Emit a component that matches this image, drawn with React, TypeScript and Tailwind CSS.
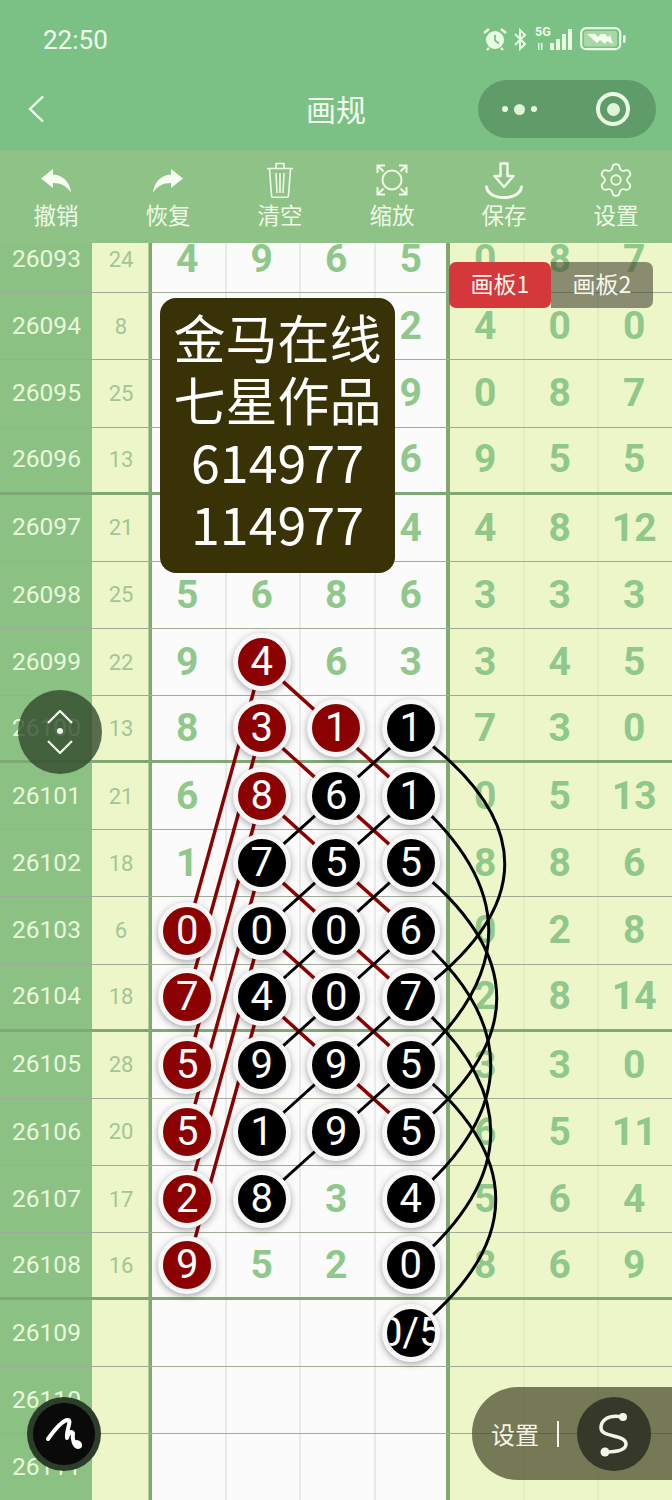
import { Settings } from "lucide-react";

const ROW_H = 67.13;
const COL_W = 74.5;
const cx = (col: number) => 150 + COL_W * col + COL_W / 2;
const cy = (row: number) => ROW_H / 2 + ROW_H * row;

// r = red ball, k = black ball, - = empty
const rows: [string, string, string][] = [
    ["26093", "24", "4 9 6 5 0 8 7"],
    ["26094", "8", "- - - 2 4 0 0"],
    ["26095", "25", "- - - 9 0 8 7"],
    ["26096", "13", "- - - 6 9 5 5"],
    ["26097", "21", "- - - 4 4 8 12"],
    ["26098", "25", "5 6 8 6 3 3 3"],
    ["26099", "22", "9 r4 6 3 3 4 5"],
    ["26100", "13", "8 r3 r1 k1 7 3 0"],
    ["26101", "21", "6 r8 k6 k1 0 5 13"],
    ["26102", "18", "1 k7 k5 k5 8 8 6"],
    ["26103", "6", "r0 k0 k0 k6 0 2 8"],
    ["26104", "18", "r7 k4 k0 k7 2 8 14"],
    ["26105", "28", "r5 k9 k9 k5 3 3 0"],
    ["26106", "20", "r5 k1 k9 k5 6 5 11"],
    ["26107", "17", "r2 k8 3 k4 5 6 4"],
    ["26108", "16", "r9 5 2 k0 8 6 9"],
    ["26109", "", "- - - k0/5 - - -"],
    ["26110", "", "- - - - - - -"],
    ["26111", "", "- - - - - - -"],
];

const redLinks = [
    [1, 6], [1, 7], [2, 7], [1, 8], [2, 8], [1, 9], [2, 9], [1, 10], [2, 10], [1, 11], [2, 11], [2, 12],
];
const blackLinks = [
    [3, 7], [2, 8], [3, 8], [2, 9], [3, 9], [2, 10], [3, 10], [2, 11], [3, 11], [2, 12], [3, 12], [2, 13],
];
const arcs = [
    [7, 94], [8, 78], [9, 86], [10, 80], [11, 80], [12, 85],
];

function Ball(props: { kind: string; value: string }) {
    return (
        <div
            className={`relative z-20 flex h-[58px] w-[58px] items-center justify-center overflow-hidden rounded-full border-[5px] border-[#f7f7f7] font-['Roboto',sans-serif] text-[40px] font-normal whitespace-nowrap text-white shadow-[0_2px_7px_rgba(0,0,0,0.35)] ${props.kind === "r" ? "bg-[#8b0000]" : "bg-black"}`}
        >
            {props.value}
        </div>
    );
}

function cellEdge(i: number) {
    if (i === 0 || i === 4) return "shadow-[inset_2px_0_0_#7fa874]";
    if (i === 3) return "shadow-[inset_2px_0_0_#e9e9e9,inset_-2px_0_0_#7fa874]";
    return i < 4 ? "shadow-[inset_2px_0_0_#e9e9e9]" : "shadow-[inset_2px_0_0_#e2eec0]";
}

function Row(props: { id: string; sum: string; cells: string; idx: number }) {
    const thick = (props.idx + 1) % 4 === 0;
    return (
        <div
            className={`grid h-[67.13px] grid-cols-[92px_58px_repeat(7,74.5px)] font-['Roboto',sans-serif] shadow-[0_1px_0_0_#8fa588] ${thick ? "border-b-[3px] border-[#7fa874]" : "border-b border-[#9dab97]"}`}
        >
            <div className="flex items-center justify-center bg-[#8cc184] pl-[1px] text-[24.500px] text-[#e9f9dc]">{props.id}</div>
            <div className="flex items-center justify-center bg-[#edf6c8] text-[22px] text-[#a4c596] shadow-[inset_-1.500px_0_0_#7fa874]">{props.sum}</div>
            {props.cells.split(" ").map((cell, i) => {
                const ball = cell[0] === "r" || cell[0] === "k";
                const bg = i < 4 ? "bg-[#fbfbfb]" : "bg-[#edf6c8]";
                return (
                    <div
                        key={`cell-${props.id}-${i}`}
                        className={`flex items-center justify-center text-[39px] font-bold text-[#8fc88a] ${bg} ${cellEdge(i)}`}
                    >
                        {ball ? <Ball kind={cell[0]} value={cell.slice(1)} /> : cell === "-" ? "" : cell}
                    </div>
                );
            })}
        </div>
    );
}

function Lines() {
    return (
        <svg className="absolute top-0 left-0 z-10" width={672} height={1276} fill="none">
            {[6, 7, 8, 9, 10, 11].map((r) => (
                <line key={`long-${r}`} x1={cx(1)} y1={cy(r)} x2={cx(0)} y2={cy(r + 4)} stroke="#8b0000" strokeWidth={3.5} />
            ))}
            {redLinks.map(([c, r]) => (
                <line key={`red-${c}-${r}`} x1={cx(c)} y1={cy(r)} x2={cx(c + 1)} y2={cy(r + 1)} stroke="#8b0000" strokeWidth={3.5} />
            ))}
            {blackLinks.map(([c, r]) => (
                <line key={`black-${c}-${r}`} x1={cx(c)} y1={cy(r)} x2={cx(c - 1)} y2={cy(r + 1)} stroke="#000" strokeWidth={3} />
            ))}
            {arcs.map(([r, b]) => (
                <path
                    key={`arc-${r}`}
                    d={`M${cx(3)} ${cy(r)} Q${cx(3) + b * 2} ${cy(r + 2)} ${cx(3)} ${cy(r + 4)}`}
                    stroke="#000"
                    strokeWidth={3}
                />
            ))}
        </svg>
    );
}

function StatusIcons() {
    return (
        <div className="flex items-center text-[#eafbe4]">
            <svg width="24" height="24" viewBox="0 0 24 24" fill="none">
                <circle cx="12" cy="13" r="9" fill="#eafbe4" />
                <path d="M12 8v5.500l4 3" stroke="#7bc185" strokeWidth="1.800" />
                <path d="M1 6l5-4M23 6l-5-4M6 21l-2 2M18 21l2 2" stroke="#eafbe4" strokeWidth="2.400" />
            </svg>
            <svg className="ml-[6px]" width="14" height="23" viewBox="0 0 14 23" fill="none">
                <path d="M2 6l10 10-5 5V2l5 5L2 17" stroke="#eafbe4" strokeWidth="2" />
            </svg>
            <div className="relative ml-[8px] h-[23px] w-[40px]">
                <span className="absolute top-[-3px] left-0 font-['Roboto',sans-serif] text-[12.500px] leading-[14px] font-bold">5G</span>
                <svg className="absolute top-0 left-0" width="40" height="23" viewBox="0 0 40 23" fill="#eafbe4">
                    <rect x="3" y="15" width="1.500" height="7" />
                    <rect x="6" y="15" width="1.500" height="7" />
                    <rect x="15" y="15" width="4" height="7" />
                    <rect x="21" y="11" width="4" height="11" />
                    <rect x="27" y="6" width="4" height="16" />
                    <rect x="33" y="1" width="4" height="21" />
                </svg>
            </div>
            <svg className="ml-[5px]" width="47" height="24" viewBox="0 0 47 24" fill="none">
                <rect x="1.200" y="1.200" width="39" height="21" rx="5" stroke="#eafbe4" strokeWidth="2.200" />
                <rect x="4" y="4" width="33" height="15.500" rx="2.500" fill="#a9d8a6" />
                <path d="M7 7h8l3 3 3-3h4l3 3 2-2 3 9-6-3-2 3-5-4-3 3z" fill="#f3fff0" />
                <rect x="43" y="8" width="2.600" height="8" rx="1.300" fill="#eafbe4" />
            </svg>
        </div>
    );
}

function Tool(props: { label: string; children: React.ReactNode }) {
    return (
        <div className="flex w-[112px] flex-col items-center">
            <div className="flex h-[40px] items-center justify-center">{props.children}</div>
            <div className="mt-[-1px] text-[22.500px] leading-[30px] text-[#eefbe6]">{props.label}</div>
        </div>
    );
}

const ArrowPath = "M0 10.500L12 1v5.500C22 7 29 14 30 25 26 18 20 15 12 15v5z";

function Toolbar() {
    return (
        <div className="flex h-[93px] bg-[#8ec286] pt-[10px] text-[#f3fdee]">
            <Tool label="撤销">
                <svg width="30" height="25" viewBox="0 0 30 25" fill="#f6fef2">
                    <path d={ArrowPath} />
                </svg>
            </Tool>
            <Tool label="恢复">
                <svg width="30" height="25" viewBox="0 0 30 25" fill="#f6fef2" className="-scale-x-100">
                    <path d={ArrowPath} />
                </svg>
            </Tool>
            <Tool label="清空">
                <svg width="26" height="36" viewBox="0 0 26 36" fill="none" stroke="#eefbe6" strokeWidth="1.600">
                    <path d="M0 6.500h26M9 6V1.500h8V6" />
                    <path d="M2.500 7l2 26.500c0 1 .7 1.700 1.700 1.700h13.600c1 0 1.700-.7 1.700-1.700L23.500 7" />
                    <path d="M9 11l1 20M13 11v20M17 11l-1 20" />
                </svg>
            </Tool>
            <Tool label="缩放">
                <svg width="32" height="32" viewBox="0 0 32 32" fill="none" stroke="#eefbe6" strokeWidth="2">
                    <circle cx="16" cy="16" r="9.500" />
                    <path d="M9 1.500H1.500V9M1.500 1.500l6 6M23 1.500h7.500V9M30.500 1.500l-6 6M1.500 23v7.500H9M1.500 30.500l6-6M30.500 23v7.500H23M30.500 30.500l-6-6" />
                </svg>
            </Tool>
            <Tool label="保存">
                <svg width="38" height="37" viewBox="0 0 38 37" fill="none" stroke="#f3fdee" strokeWidth="2.400" strokeLinejoin="round" strokeLinecap="round">
                    <path d="M15.500 1.500h7v12.500h6L19 25 9.500 14h6z" />
                    <path d="M1.500 25c1 6.500 8 10.500 17.500 10.500S35.500 31.500 36.500 25" strokeWidth="3" />
                </svg>
            </Tool>
            <Tool label="设置">
                <Settings size={38} strokeWidth={1.150} color="#eefbe6" />
            </Tool>
        </div>
    );
}

function Header() {
    return (
        <div className="h-[150px] bg-[#7bc185] text-[#f2fdee]">
            <div className="flex h-[80px] items-start justify-between pt-[27px] pr-[45px] pl-[43px]">
                <div className="font-['Roboto',sans-serif] text-[26px] leading-[26px] text-[#f2fdee]">22:50</div>
                <StatusIcons />
            </div>
            <div className="grid h-[58px] grid-cols-[1fr_auto_1fr] items-center">
                <svg className="ml-[27px]" width="18" height="28" viewBox="0 0 18 28" fill="none" stroke="#f2fdee" strokeWidth="2.400">
                    <path d="M16 1.500L3 14l13 12.500" />
                </svg>
                <div className="pb-[2px] text-[30px] leading-[40px]">画规</div>
                <div className="ml-auto mr-[16px] flex h-[58px] w-[178px] items-center rounded-full bg-[#5f9c69]">
                    <div className="ml-[24px] flex items-center">
                        <span className="h-[6px] w-[6px] rounded-full bg-[#eafbe4]" />
                        <span className="ml-[6px] h-[11px] w-[11px] rounded-full bg-[#dff3d9]" />
                        <span className="ml-[6px] h-[6px] w-[6px] rounded-full bg-[#eafbe4]" />
                    </div>
                    <div className="ml-[59px] flex h-[34px] w-[34px] items-center justify-center rounded-full border-[4px] border-[#eafbe4]">
                        <span className="h-[13px] w-[13px] rounded-full bg-[#dff3d9]" />
                    </div>
                </div>
            </div>
        </div>
    );
}

export default function App() {
    return (
        <div className="relative h-[1500px] w-[672px] overflow-hidden bg-[#edf6c8] font-['Noto_Sans_CJK_SC','Noto_Sans',sans-serif]">
            <Header />
            <Toolbar />
            <div className="h-[1257px] overflow-hidden">
                <div className="relative mt-[-16.800px]">
                    {rows.map((row, idx) => (
                        <Row key={row[0]} id={row[0]} sum={row[1]} cells={row[2]} idx={idx} />
                    ))}
                    <Lines />
                </div>
            </div>

            {/* overlays */}
            <div className="absolute top-[298px] left-[160px] z-30 flex h-[275px] w-[235px] flex-col items-center justify-center rounded-[16px] bg-[#383206] pb-[12px] text-[52px] leading-[62px] text-white">
                <div>金马在线</div>
                <div>七星作品</div>
                <div>614977</div>
                <div>114977</div>
            </div>
            <div className="absolute top-[262px] left-[449px] z-30 flex h-[46px] text-[23px] text-[#f7f7ef]">
                <div className="flex w-[102px] items-center justify-center rounded-[7px] bg-[#d5383a] pb-[3px]">画板1</div>
                <div className="flex w-[102px] items-center justify-center rounded-r-[7px] bg-[rgba(70,70,50,0.6)] pb-[3px]">画板2</div>
            </div>
            <div className="absolute top-[690px] left-[18px] z-30 flex h-[84px] w-[84px] items-center justify-center rounded-full bg-[rgba(45,70,40,0.78)]">
                <svg width="28" height="44" viewBox="0 0 28 44" fill="none" stroke="#f2f7ee" strokeWidth="2.200">
                    <path d="M2 13L14 1l12 12M2 31l12 12 12-12" />
                    <circle cx="14" cy="21" r="3" fill="#f2f7ee" stroke="none" />
                </svg>
            </div>
            <div className="absolute top-[1397px] left-[27px] z-30 flex h-[74px] w-[74px] items-center justify-center rounded-full border-[6px] border-[rgba(50,70,48,0.85)] bg-[#0a0a0a]">
                <svg className="shrink-0" width="74" height="74" viewBox="0 0 74 74" fill="none" stroke="#fff" strokeWidth="4" strokeLinecap="round" strokeLinejoin="round">
                    <path d="M21 42C26 35 33 25 40 23 46 22 39 32 40 41 41 37 44 33 46 36 45 42 47 50 51 50 55 50 53 45 49 45" />
                </svg>
            </div>
            <div className="absolute top-[1387px] right-0 z-30 flex h-[93px] w-[200px] items-center rounded-l-[46px] bg-[rgba(70,72,40,0.72)] pl-[19px] text-[#f4f4ea]">
                <div className="text-[24px] leading-[30px]">设置</div>
                <div className="ml-[18px] h-[26px] w-[2px] bg-[#f4f4ea]" />
                <div className="ml-[18px] flex h-[74px] w-[74px] items-center justify-center rounded-full bg-[#36382a]">
                    <svg width="74" height="74" viewBox="0 0 74 74" fill="none" stroke="#f4f4ea" strokeWidth="3.500">
                        <path d="M46 20C30 17 24 24 24 31 24 41 49 37 49 47 49 53 40 55 28 55" />
                        <circle cx="46" cy="20" r="4" fill="#f4f4ea" stroke="none" />
                        <circle cx="28" cy="55" r="4.500" fill="#f4f4ea" stroke="none" />
                    </svg>
                </div>
            </div>
        </div>
    );
}
